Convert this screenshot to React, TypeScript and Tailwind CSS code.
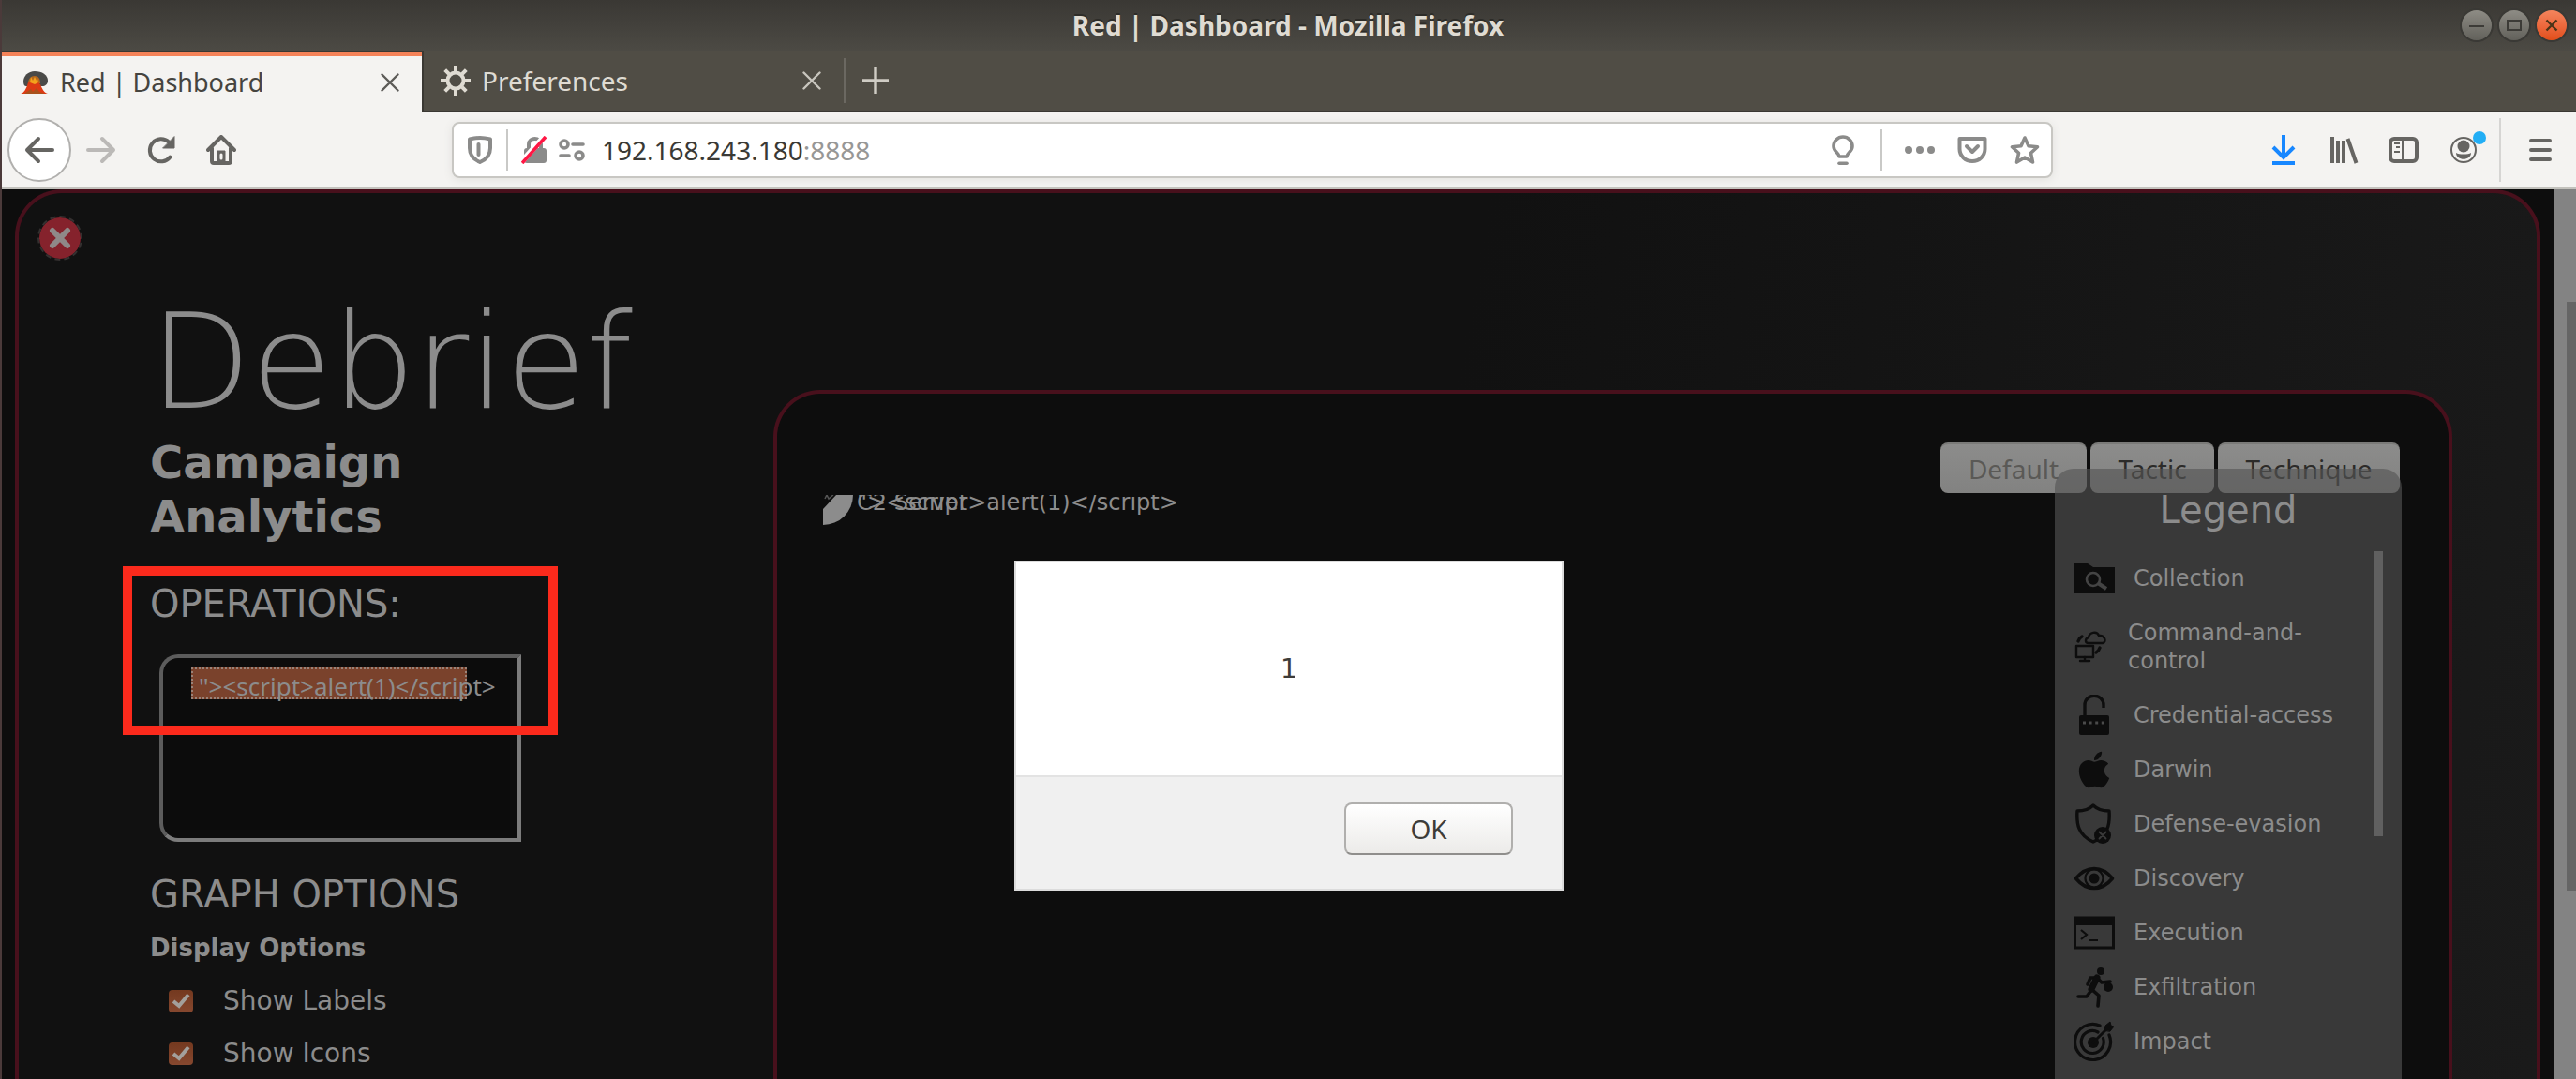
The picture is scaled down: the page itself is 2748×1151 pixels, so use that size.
import React from 'react';
import { FaApple } from 'react-icons/fa';

type IconProps = { className?: string };

const stroke = {
  fill: 'none',
  stroke: 'currentColor',
  strokeLinecap: 'round' as const,
  strokeLinejoin: 'round' as const,
};

function CloseIcon({ className }: IconProps) {
  return (
    <svg viewBox="0 0 20 20" className={className} {...stroke} strokeWidth="2.4">
      <path d="M1.5 1.5l17 17M18.5 1.5l-17 17" />
    </svg>
  );
}

function Volcano() {
  return (
    <svg viewBox="0 0 30 26" className="h-[26px] w-[30px]">
      <path d="M3 12c0-6 5-11 12-11 8 0 14 4 14 10 0 4-3 6-6 6H6c-2 0-3-2-3-5z" fill="#4a4a48" />
      <path d="M8 14c0-5 3-8 7-8s6 3 6 8z" fill="#b8681c" />
      <path d="M0 25c4-1 6-5 8-12l4-2 6 1 3 3c2 5 4 9 8 10z" fill="#dd3a14" />
      <path d="M11 7l2 4 2-4 2 4 1-2 1 4-4 2-5-2z" fill="#f4a21c" />
      <path d="M4 25l7-5 2 3 4-4 3 4 6 2z" fill="#a8521c" />
    </svg>
  );
}

function Gear() {
  return (
    <svg viewBox="0 0 32 32" className="size-8" fill="none" stroke="#dfdbd2">
      <circle cx="16" cy="16" r="8.5" strokeWidth="4" />
      <path
        strokeWidth="4"
        d="M16 0v6M16 26v6M0 16h6M26 16h6M4.7 4.7l4.2 4.2M23.1 23.1l4.2 4.2M27.3 4.7l-4.2 4.2M8.9 23.1l-4.2 4.2"
      />
    </svg>
  );
}

function TitleBar() {
  return (
    <header className="relative flex h-[54px] items-center justify-center bg-linear-to-b from-[#3a3834] to-[#4c4a44]">
      <h1 className="text-[28px] font-bold text-[#dfdbd2] [text-shadow:0_-2px_0_#2d2c28]">Red | Dashboard - Mozilla Firefox</h1>
      <div className="absolute right-[10px] flex gap-2">
        <button aria-label="Minimize" className="size-8 rounded-full bg-linear-to-b from-[#8e8c85] to-[#62615b] shadow-[0_0_0_2px_#3a3935]">
          <svg viewBox="0 0 32 32" fill="none" stroke="#3c3b37" strokeWidth="2"><path d="M8 17h16" /></svg>
        </button>
        <button aria-label="Maximize" className="size-8 rounded-full bg-linear-to-b from-[#8e8c85] to-[#62615b] shadow-[0_0_0_2px_#3a3935]">
          <svg viewBox="0 0 32 32" fill="none" stroke="#3c3b37" strokeWidth="2"><path d="M9 11h14v10H9z" /></svg>
        </button>
        <button aria-label="Close window" className="size-8 rounded-full bg-linear-to-b from-[#f4845c] to-[#e34d17] shadow-[0_0_0_2px_#3a3935]">
          <svg viewBox="0 0 32 32" fill="none" stroke="#4a3418" strokeWidth="2.4"><path d="M10.5 10.5l11 11M21.5 10.5l-11 11" /></svg>
        </button>
      </div>
    </header>
  );
}

function TabStrip() {
  return (
    <div className="flex h-[66px] bg-[#504d45] pl-[2px]" role="tablist">
      <div role="tab" aria-selected="true" className="flex w-[450px] items-center border-t-2 border-r-2 border-[#3a3833] bg-[#f4f3f1] shadow-[inset_0_4px_0_#f58359]">
        <span className="ml-5"><Volcano /></span>
        <span className="ml-3 text-[27px] text-[#45443f]">Red | Dashboard</span>
        <button aria-label="Close tab" className="mr-6 ml-auto text-[#5c5b58]"><CloseIcon className="size-5" /></button>
      </div>
      <div className="flex flex-1 items-center border-b-2 border-[#3a3833]">
        <div role="tab" aria-selected="false" className="flex w-[450px] items-center border-r-2 border-[#6b6861] bg-clip-padding pl-[18px]">
          <Gear />
          <span className="ml-3 text-[28px] leading-12 text-[#dfdbd2]">Preferences</span>
          <button aria-label="Close tab" className="mr-6 ml-auto text-[#c9c6be]"><CloseIcon className="size-5" /></button>
        </div>
        <button aria-label="New tab" className="ml-[18px] text-[#cfccc4]">
          <svg viewBox="0 0 28 28" className="size-7" fill="none" stroke="currentColor" strokeWidth="3.4"><path d="M14 0v28M0 14h28" /></svg>
        </button>
      </div>
    </div>
  );
}

function Toolbar() {
  return (
    <div className="flex h-[82px] items-center border-b-2 border-[#c3c2bd] bg-[#f4f3f1] pl-2 text-[#666562]">
      <button aria-label="Back" className="flex size-[68px] items-center justify-center rounded-full border-2 border-[#b1b0ae] bg-white">
        <svg viewBox="0 0 32 32" className="size-8" {...stroke} strokeWidth="4"><path d="M30 16H3M15 4L3 16l12 12" /></svg>
      </button>
      <button aria-label="Forward" className="ml-4 text-[#bbb9b7]">
        <svg viewBox="0 0 32 32" className="size-8" {...stroke} strokeWidth="4"><path d="M2 16h27M17 4l12 12-12 12" /></svg>
      </button>
      <button aria-label="Reload" className="ml-8">
        <svg viewBox="0 0 32 32" className="size-8" {...stroke} strokeWidth="4">
          <path d="M25.500 23.500A12 12 0 1 1 24 7.500" />
          <path d="M30 2v12H18z" fill="currentColor" strokeWidth="1" />
        </svg>
      </button>
      <button aria-label="Home" className="ml-8">
        <svg viewBox="0 0 32 32" className="size-8" {...stroke} strokeWidth="4">
          <path d="M2 16L16 2l14 14M6 14v14a2 2 0 0 0 2 2h16a2 2 0 0 0 2-2V14" />
          <path d="M12 30V17h8v13z" fill="currentColor" strokeWidth="1" />
          <path d="M16 21v4" stroke="#f4f3f1" strokeWidth="3" />
        </svg>
      </button>

      <div className="ml-[230px] flex h-[60px] flex-1 items-center rounded-lg border-2 border-[#c8c7c3] bg-white pr-3 pl-[14px] text-[#8b8b8a] shadow-[0_2px_10px_#e2e1de]">
        <svg viewBox="0 0 28 32" className="h-8 w-7" {...stroke} strokeWidth="4">
          <path d="M14 3c4 0 7 .5 11 1.500V14c0 7-4 12-11 15C7 26 3 21 3 14V4.500C7 3.500 10 3 14 3z" />
          <path d="M12.500 10v11" strokeWidth="4" />
        </svg>
        <span className="mx-[14px] h-11 w-[2px] bg-[#c9c9c7]" />
        <svg viewBox="0 0 28 30" className="h-[30px] w-7" fill="none">
          <path d="M8 14V9c0-8 13-8 13 0v5" stroke="#8b8b8a" strokeWidth="4" />
          <rect x="3" y="13" width="24" height="16" rx="3" fill="#8b8b8a" />
          <path d="M1 27L26 -1" stroke="#fff" strokeWidth="6" />
          <path d="M1 29L26 1" stroke="#ff1744" strokeWidth="3.600" />
        </svg>
        <svg viewBox="0 0 28 24" className="ml-3 h-6 w-7" {...stroke} strokeWidth="3.600">
          <circle cx="6" cy="6" r="4" /><path d="M15 6h11M2 18h9" /><circle cx="22" cy="18" r="4" />
        </svg>
        <label htmlFor="address" className="sr-only">Address</label>
        <div className="relative ml-[18px] flex-1 text-[28px] leading-10">
          <p className="text-[#3a3935]">192.168.243.180<span className="text-[#979796]">:8888</span></p>
          <input id="address" type="text" className="absolute inset-0 w-full bg-transparent outline-none" />
        </div>
        <button aria-label="Tips">
          <svg viewBox="0 0 32 32" className="size-8" {...stroke} strokeWidth="3.600">
            <path d="M12 23c0-4-6-5-6-11a10 10 0 0 1 20 0c0 6-6 7-6 11z" /><path d="M12 30.200h8" />
          </svg>
        </button>
        <span className="mr-6 ml-6 h-11 w-[2px] bg-[#c9c9c7]" />
        <button aria-label="Page actions">
          <svg viewBox="0 0 32 32" className="size-8" fill="currentColor">
            <circle cx="4" cy="16" r="4" /><circle cx="16" cy="16" r="4" /><circle cx="28" cy="16" r="4" />
          </svg>
        </button>
        <button aria-label="Save to Pocket" className="ml-6">
          <svg viewBox="0 0 32 32" className="size-8" {...stroke} strokeWidth="4">
            <path d="M2.500 4h27v11a13.500 13 0 0 1-27 0z" /><path d="M10 12l6 6 6-6" />
          </svg>
        </button>
        <button aria-label="Bookmark" className="ml-6">
          <svg viewBox="0 0 32 32" className="size-8" {...stroke} strokeWidth="3.600">
            <path d="M16 3l4 8.800 9.500 1-7 6.500 2 9.700-8.500-5-8.500 5 2-9.700-7-6.500 9.500-1z" />
          </svg>
        </button>
      </div>

      <div className="ml-[230px] flex items-center">
        <button aria-label="Downloads" className="text-[#1787ff]">
          <svg viewBox="0 0 32 32" className="size-8" fill="none" stroke="currentColor" strokeWidth="4">
            <path d="M16 0v24M5 13l11 11 11-11" /><path d="M4 30h24" />
          </svg>
        </button>
        <button aria-label="Library" className="ml-8">
          <svg viewBox="0 0 32 32" className="size-8" fill="none" stroke="currentColor" strokeWidth="4">
            <path d="M4 2v28M10 6v24M16 6v24M20.500 4l9 26" />
          </svg>
        </button>
        <button aria-label="Sidebars" className="ml-8">
          <svg viewBox="0 0 32 32" className="size-8" fill="none" stroke="currentColor">
            <rect x="2" y="4" width="28" height="24" rx="4" strokeWidth="4" />
            <path d="M15 4v24M6 9h6M8 13h4M6 18h6" strokeWidth="2" />
          </svg>
        </button>
        <button aria-label="Account" className="relative ml-8">
          <svg viewBox="0 0 32 32" className="size-8" fill="currentColor">
            <circle cx="16" cy="16" r="13" fill="none" stroke="currentColor" strokeWidth="2" />
            <circle cx="16" cy="12" r="6.500" /><path d="M8 19c3 2 13 2 16 0 0 9-16 9-16 0z" />
          </svg>
          <span className="absolute -top-1 -right-2 size-[14px] rounded-full bg-[#22aef5]" />
        </button>
        <span className="ml-[22px] h-[68px] w-[2px] bg-[#d6d5d3]" />
        <button aria-label="Menu" className="mr-6 ml-7">
          <svg viewBox="0 0 28 28" className="size-7" {...stroke} strokeWidth="4"><path d="M4 4h20M4 14h20M4 24h20" /></svg>
        </button>
      </div>
    </div>
  );
}

const icon = 'h-11 w-11 shrink-0';

const legend: { name: string; icon: React.ReactNode; small?: boolean }[] = [
  {
    name: 'Collection',
    icon: (
      <svg viewBox="0 0 44 44" className={icon}>
        <path d="M0 6h15l6 4h23v28H0z" fill="currentColor" />
        <g stroke="#444" fill="none" strokeWidth="2.600"><circle cx="21" cy="23" r="7" /><path d="M26 27l9 6" strokeWidth="4" /></g>
      </svg>
    ),
  },
  {
    name: 'Command-and-control',
    small: true,
    icon: (
      <svg viewBox="0 0 38 38" className="h-[38px] w-[38px] shrink-0" {...stroke} strokeWidth="2.400">
        <path d="M16 15c-4 0-4-5 0-6 1-6 9-7 11-2 6-1 9 7 4 8z" />
        <rect x="3" y="18" width="18" height="12" /><path d="M12 30v4M7 34h10" />
        <path d="M5 13c1-3 2-4 4-5M28 20c-1 3-2 4-4 5" strokeWidth="3.400" />
      </svg>
    ),
  },
  {
    name: 'Credential-access',
    icon: (
      <svg viewBox="0 0 44 44" className={icon}>
        <path d="M12 22V11c0-13 20-13 20 0v3" fill="none" stroke="currentColor" strokeWidth="3.400" />
        <rect x="6" y="22" width="32" height="21" rx="2" fill="currentColor" />
        <path d="M10 30h25" stroke="#4a4a4a" strokeWidth="3" strokeDasharray="3 3.600" />
      </svg>
    ),
  },
  { name: 'Darwin', icon: <FaApple className={icon} /> },
  {
    name: 'Defense-evasion',
    icon: (
      <svg viewBox="0 0 44 44" className={icon} {...stroke} strokeWidth="3.400">
        <path d="M21 2c5 5 10 6 17 6 1 14-1 26-17 33C5 34 3 22 4 8c7 0 12-1 17-6z" />
        <circle cx="31" cy="34" r="9" fill="currentColor" stroke="none" />
        <path d="M27.500 30.500l7 7M34.500 30.500l-7 7" stroke="#3a3a3a" strokeWidth="1.800" />
      </svg>
    ),
  },
  {
    name: 'Discovery',
    icon: (
      <svg viewBox="0 0 44 44" className={icon} {...stroke} strokeWidth="3.600">
        <path d="M2.500 22C14 8 30 8 41.500 22 30 36 14 36 2.500 22z" />
        <circle cx="22" cy="22" r="9.500" strokeWidth="2.200" /><circle cx="22" cy="22" r="5.500" fill="currentColor" stroke="none" />
      </svg>
    ),
  },
  {
    name: 'Execution',
    icon: (
      <svg viewBox="0 0 44 44" className={icon} fill="none" stroke="currentColor">
        <rect x="1.500" y="6" width="41" height="32" strokeWidth="3" /><path d="M0 10h44" strokeWidth="8" />
        <path d="M8 19l6 5-6 5M16 30h10" strokeWidth="2.200" />
      </svg>
    ),
  },
  {
    name: 'Exfiltration',
    icon: (
      <svg viewBox="0 0 44 44" className={icon} {...stroke} strokeWidth="3.600">
        <circle cx="29" cy="5" r="4" fill="currentColor" stroke="none" />
        <path d="M15 19l3-7h7l5 5 9-1M5 32h9l8-11M19 24l8 7-1 11" />
        <path d="M25 12l-6 12" strokeWidth="7" />
        <circle cx="37" cy="22" r="5" fill="currentColor" stroke="none" />
      </svg>
    ),
  },
  {
    name: 'Impact',
    icon: (
      <svg viewBox="0 0 44 44" className={icon} {...stroke} strokeWidth="3.200">
        <path d="M28 5A19 19 0 1 0 38 15M26 12A12 12 0 1 0 31.500 18.500" />
        <circle cx="21" cy="23" r="6" fill="currentColor" stroke="none" />
        <path d="M21 23L38 6" strokeWidth="3" /><path d="M33 10l1-5 5-4 1 4 3 1-4 5z" fill="currentColor" strokeWidth="1" />
      </svg>
    ),
  },
];

function Legend() {
  return (
    <aside className="absolute top-20 right-[50px] bottom-0 w-[370px] overflow-hidden rounded-t-[20px] bg-[rgba(85,85,85,0.626)] text-[#8c8c8c]">
      <h3 className="pt-5 text-center text-[40px] leading-[48px]">Legend</h3>
      <div className="mt-5 mr-5 flex items-start">
        <ul className="flex-1 pl-5 text-[24px] leading-[30px]">
          {legend.map((row) => (
            <li key={row.name} className="flex min-h-[58px] items-center py-[7px]">
              <span className="text-[#0d0d0d]">{row.icon}</span>
              <span className={row.small ? 'ml-5 w-[220px] py-[7px]' : 'ml-5 whitespace-nowrap'}>{row.name}</span>
            </li>
          ))}
        </ul>
        <div className="h-[304px] w-[10px] bg-[#606060]" />
      </div>
    </aside>
  );
}

function GraphPanel() {
  const base = 'h-[54px] rounded-lg border-t-2 border-[#7a7a78] bg-linear-to-b from-[#8c8c8b] to-[#828281]';
  return (
    <section className="relative mt-[210px] mr-[90px] w-2/3 rounded-t-[50px] border-4 border-b-0 border-[#48101c] bg-[#0d0d0d]">
      <div className="mt-[52px] mr-[52px] flex justify-end gap-1 font-['Noto_Sans',sans-serif] text-[28px] leading-[48px] text-[#2c2b29]">
        <button disabled className={`${base} w-[156px] text-[#5a5956]`}>Default</button>
        <button className={`${base} w-[132px]`}>Tactic</button>
        <button className={`${base} w-[194px]`}>Technique</button>
      </div>
      <svg className="mt-[2px] ml-[49px] block h-40 w-2/3 overflow-hidden" fill="#8c8c8c" fontSize="24">
        <circle cx="0" cy="0" r="32" />
        <path d="M0 0h14L0 15z" fill="#0d0d0d" />
        <path d="M2 4l2-4 2 4 5-4" fill="none" stroke="#555" strokeWidth="1.500" />
        <text x="36" y="16">C2 Server</text>
        <text x="36" y="16">{'"><script>alert(1)</script>'}</text>
      </svg>
      <Legend />
    </section>
  );
}

function Option({ id, label }: { id: string; label: string }) {
  return (
    <div className="flex h-14 items-center">
      <span className="relative ml-5 h-6 w-[26px]">
        <input id={id} type="checkbox" defaultChecked className="peer absolute inset-0 appearance-none rounded bg-linear-to-b from-[#74391f] to-[#86482f]" />
        <svg viewBox="0 0 26 24" className="pointer-events-none absolute inset-0 hidden peer-checked:block" fill="none" stroke="#a3a09c" strokeWidth="4">
          <path d="M5 12l6 5 10-12" />
        </svg>
      </span>
      <label htmlFor={id} className="ml-8 text-[28px] leading-8">{label}</label>
    </div>
  );
}

function Sidebar() {
  return (
    <div className="flex-1 pl-[140px] text-[#8c8c8c]">
      <h1 className="pt-[104px] text-[140px] leading-[154px] font-extralight">Debrief</h1>
      <h2 className="w-[400px] text-[48px] leading-[58px] font-bold">Campaign Analytics</h2>
      <div className="relative mt-6">
        <label htmlFor="operations" className="block pt-4 text-[40px] leading-[48px]">OPERATIONS:</label>
        <div className="mt-[30px] ml-[10px] h-[200px] w-[386px] rounded-l-[20px] border-4 border-t-[#5c5c5c] border-r-[#7c7c7c] border-b-[#7c7c7c] border-l-[#5c5c5c] bg-[#0c0c0c] pt-[10px] pr-6 pl-[30px]">
          <select
            id="operations"
            multiple
            defaultValue={['1']}
            className="h-40 w-full appearance-none overflow-hidden bg-transparent font-['Noto_Sans',sans-serif] text-[26px] leading-[26px] outline-none"
          >
            <option
              value="1"
              className="h-[34px] w-[294px] overflow-visible border-2 border-dotted border-[#9b8378] px-[6px] py-0 leading-[26px] whitespace-nowrap text-[#8c8c8c] checked:bg-linear-to-b checked:from-[#7a422c] checked:to-[#7a422c]"
            >
              {'"><script>alert(1)</script>'}
            </option>
          </select>
        </div>
        <div className="pointer-events-none absolute top-0 -left-[29px] h-[180px] w-[464px] border-10 border-[#fc2a1c]" />
      </div>
      <h3 className="mt-8 text-[40px] leading-[48px]">GRAPH OPTIONS</h3>
      <h4 className="mt-4 text-[26px] leading-[34px] font-bold">Display Options</h4>
      <div className="mt-3">
        <Option id="labels" label="Show Labels" />
        <Option id="icons" label="Show Icons" />
      </div>
    </div>
  );
}

function AlertDialog() {
  return (
    <div className="absolute inset-x-0 top-[396px] flex justify-center">
      <div role="alertdialog" aria-labelledby="message" className="w-[586px] border-2 border-[#dcdcdc] bg-white text-[28px] text-[#3d3c39]">
        <p id="message" className="flex h-[227px] items-center justify-center">1</p>
        <div className="flex justify-end border-t-2 border-[#e3e3e3] bg-[#f0f0f0] pt-[27px] pr-[52px] pb-[36px]">
          <button className="h-[56px] w-[180px] rounded-lg border-2 border-[#b0afad] border-b-[#8f8e8c] bg-linear-to-b from-white to-[#ecebe9] font-['Noto_Sans',sans-serif]">OK</button>
        </div>
      </div>
    </div>
  );
}

export default function App() {
  return (
    <div className="flex h-screen flex-col overflow-hidden border-l-2 border-[#4b3a3a] bg-[#0d0d0d] font-['DejaVu_Sans',sans-serif]">
      <div className="-ml-[2px] font-['Noto_Sans',sans-serif]">
        <TitleBar />
        <TabStrip />
        <Toolbar />
      </div>
      <div className="relative flex min-h-0 flex-1">
        <main className="relative mr-[14px] ml-[14px] flex min-w-0 flex-1 overflow-hidden rounded-t-[50px] border-4 border-b-0 border-[#48101c] bg-[linear-gradient(100deg,#111_0%,#111_55%,#1a1a1a_100%)]">
          <button aria-label="Close section" className="absolute top-6 left-5 flex size-12 items-center justify-center rounded-full border-2 border-dashed border-[#343030] bg-[#85222c] bg-clip-padding">
            <svg viewBox="0 0 24 24" className="size-6" {...stroke} stroke="#8f8888" strokeWidth="6"><path d="M4 4l16 16M20 4L4 20" /></svg>
          </button>
          <Sidebar />
          <GraphPanel />
        </main>
        <div className="w-6 bg-[#838383]">
          <div className="mt-[120px] ml-auto h-[628px] w-[10px] bg-[#656565]" />
        </div>
        <AlertDialog />
      </div>
    </div>
  );
}
